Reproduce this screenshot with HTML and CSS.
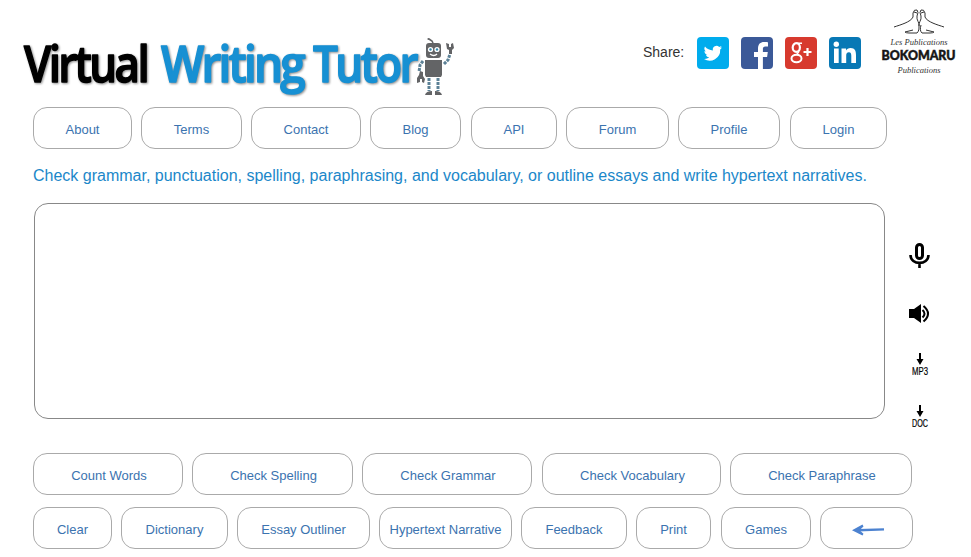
FILE: index.html
```
<!DOCTYPE html>
<html lang="en">
<head>
  <meta charset="UTF-8">
  <title>Virtual Writing Tutor</title>
  <link rel="stylesheet" href="styles.css">
</head>
<body>
  <header class="header">
    <a class="logo" href="#">
      <svg width="440" height="76" viewBox="0 0 440 76">
        <g class="logo-text">
          <text class="logo-black" x="4" y="56" textLength="123" lengthAdjust="spacingAndGlyphs">Virtual</text>
          <text class="logo-blue" x="141" y="56" textLength="142" lengthAdjust="spacingAndGlyphs">Writing</text>
          <text class="logo-blue" x="293" y="56" textLength="103" lengthAdjust="spacingAndGlyphs">Tutor</text>
        </g>
        <!-- robot -->
        <g transform="translate(0 -1)">
          <g fill="#636466">
            <path d="M406 21q0-3 3-3h9q3 0 3 3v9q0 3-3 3h-9q-3 0-3-3z"/>
            <path d="M405 35h17v15l-1 2h-15l-1-2z"/>
            <path d="M405 70q1-4 7-4v4zM415 70v-4q6 0 7 4z"/>
            <path d="M426 18l1 6 2 1v4h3v-4l2-2-1-5-2 1v3h-2v-3zM400 46l3 1v4l2 3-1 4-2-1v-3h-2v3l-3 1v-5l2-3z"/>
          </g>
          <path d="M413 18l-1-2-3-2" stroke="#636466" stroke-width="1.600" fill="none"/>
          <path d="M424 39l4-4 2-6M403 36l-3 4-1 7" stroke="#5c8196" stroke-width="3" fill="none" stroke-dasharray="3 1"/>
          <circle cx="408.500" cy="14" r="1.100" fill="#636466"/>
          <path d="M409 53v13M418 53v13" stroke="#5c8196" stroke-width="3" stroke-dasharray="3 1"/>
          <circle cx="410.500" cy="24.500" r="2.600" fill="#fff"/><circle cx="417" cy="24.500" r="2.600" fill="#fff"/>
          <circle cx="410.500" cy="24.500" r="1.200" fill="#3489ac"/><circle cx="417" cy="24.500" r="1.200" fill="#3489ac"/>
          <path d="M410 29q4 3 7 0" fill="none" stroke="#fff" stroke-width="1.300"/>
        </g>
      </svg>
    </a>
    <div class="share">
      <span class="share-label">Share:</span>
      <a class="social twitter" href="#">
        <svg width="32" height="32" viewBox="0 0 32 32"><path fill="#fff" d="M25 10.500a8 8 0 0 1-2.100.6 3.700 3.700 0 0 0 1.600-2 7.500 7.500 0 0 1-2.300.9 3.700 3.700 0 0 0-6.300 3.400A10.500 10.500 0 0 1 8 9.500a3.700 3.700 0 0 0 1.200 5 3.700 3.700 0 0 1-1.700-.5 3.700 3.700 0 0 0 3 3.700 3.700 3.700 0 0 1-1.700.1 3.700 3.700 0 0 0 3.500 2.500A7.500 7.500 0 0 1 7 21.900a10.500 10.500 0 0 0 16.200-9.400 7 7 0 0 0 1.800-2z"/></svg>
      </a>
      <a class="social facebook" href="#">
        <svg width="32" height="32" viewBox="0 0 32 32"><path fill="#fff" d="M17 32V20h-4v-5h4v-3.500C17 7 19.500 5 23.200 5c1.700 0 3.300.2 3.800.3v4.300h-2.600c-2 0-2.500 1-2.500 2.500V15h4.900l-.7 5h-4.200v12z"/></svg>
      </a>
      <a class="social google" href="#">
        <svg width="32" height="32" viewBox="0 0 32 32" fill="none" stroke="#fff">
          <ellipse cx="11.300" cy="10.500" rx="3.600" ry="4.300" stroke-width="2.200"/>
          <path d="M12 6.200h5M13.500 14c1 2-2.500 2.500-1.500 4" stroke-width="1.600"/>
          <ellipse cx="11.500" cy="21.500" rx="5" ry="3.800" stroke-width="2"/>
          <path d="M22.500 11v8M18.500 15h8" stroke-width="2.200"/>
        </svg>
      </a>
      <a class="social linkedin" href="#">
        <svg width="32" height="32" viewBox="0 0 32 32"><path fill="#fff" d="M5 11.500h4.700V26H5zM12.500 11.500H17v2c.8-1.300 2.300-2.400 4.600-2.400 4.500 0 5.400 3 5.400 6.900v8h-4.700v-7.200c0-1.900-.4-3.600-2.400-3.600-2.100 0-2.700 1.500-2.700 3.500V26h-4.700z"/><circle cx="7.300" cy="7.200" r="2.700" fill="#fff"/></svg>
      </a>
    </div>
    <a class="publisher" href="#">
      <svg width="52" height="27" viewBox="0 0 52 27" fill="none" stroke="#333" stroke-width="1">
        <path d="M1 19C7 17 18 14 20 9l0-4q1-4 4-3 2 2 0 6c-1 4 3 7 2 10 0 3 0 5-2 7h-8q-3 0-4-1l8-2"/>
        <path d="M51 19C45 17 34 14 32 9l0-4q-1-4-4-3-2 2 0 6c1 4-3 7-2 10"/>
        <path d="M28 17c-1 4-1 6 1 8h8q3 0 4-1l-8-2M21 4l3 1M31 4l-3 1"/>
      </svg>
      <span class="pub-script">Les Publications</span>
      <svg width="78" height="14" viewBox="0 0 78 14"><text class="pub-name" x="1.500" y="11" textLength="74" lengthAdjust="spacingAndGlyphs">BOKOMARU</text></svg>
      <span class="pub-script">Publications</span>
    </a>
  </header>

  <nav class="buttons menu">
    <a href="#">About</a>
    <a href="#">Terms</a>
    <a href="#">Contact</a>
    <a href="#">Blog</a>
    <a href="#">API</a>
    <a href="#">Forum</a>
    <a href="#">Profile</a>
    <a href="#">Login</a>
  </nav>

  <p class="tagline">Check grammar, punctuation, spelling, paraphrasing, and vocabulary, or outline essays and write hypertext narratives.</p>

  <main class="editor">
    <textarea class="essay" aria-label="Your text"></textarea>
    <div class="tools">
      <svg class="mic" width="22" height="26" viewBox="0 0 22 26" fill="none" stroke="#000">
        <rect x="7.500" y="1.500" width="6" height="14" rx="3" stroke-width="3"/>
        <path d="M1.500 12c0 10.500 18 10.500 18 0M10.500 19v6" stroke-width="2.600"/>
      </svg>
      <svg class="speaker" width="22" height="20" viewBox="0 0 22 20">
        <path d="M0 5h5l7-5v19l-7-5H0z"/>
        <path d="M13.500 6q4 3.500 0 7.500M14.500 2q9 7.500 0 15.500" fill="none" stroke="#000" stroke-width="2.100"/>
      </svg>
      <a class="download mp3" href="#">
        <svg width="8" height="12" viewBox="0 0 8 12"><path d="M3 0h2v6h2.500L4 12 .5 6H3z"/></svg>
        <svg width="30" height="12" viewBox="0 0 30 12"><text class="download-label" x="7" y="10" textLength="16" lengthAdjust="spacingAndGlyphs">MP3</text></svg>
      </a>
      <a class="download" href="#">
        <svg width="8" height="12" viewBox="0 0 8 12"><path d="M3 0h2v6h2.500L4 12 .5 6H3z"/></svg>
        <svg width="30" height="12" viewBox="0 0 30 12"><text class="download-label" x="7" y="10" textLength="16" lengthAdjust="spacingAndGlyphs">DOC</text></svg>
      </a>
    </div>
  </main>

  <div class="buttons checks">
    <a href="#">Count Words</a>
    <a href="#">Check Spelling</a>
    <a href="#">Check Grammar</a>
    <a href="#">Check Vocabulary</a>
    <a href="#">Check Paraphrase</a>
  </div>
  <div class="buttons extras">
    <a href="#">Clear</a>
    <a href="#">Dictionary</a>
    <a href="#">Essay Outliner</a>
    <a href="#">Hypertext Narrative</a>
    <a href="#">Feedback</a>
    <a href="#">Print</a>
    <a href="#">Games</a>
    <a href="#" aria-label="Back">
      <svg class="arrow" width="33" height="12" viewBox="0 0 33 12"><path d="M32 5.400L6 6.300" stroke="#4c82d0" stroke-width="2.400"/><path d="M0 6.300L10.500.5l1 2L7.500 6.200l4 3.500-1 1.800z" fill="#4c82d0"/></svg>
    </a>
  </div>
</body>
</html>
```

FILE: styles.css
```
* {
  box-sizing: border-box;
}

body {
  margin: 0;
  padding: 0 0 0 33px;
  height: 557px;
  overflow: hidden;
  background: #fff;
  font-family: "Liberation Sans", Arial, sans-serif;
  font-size: 13px;
  color: #333;
}

a {
  color: #3b73af;
  text-decoration: none;
}

svg {
  display: block;
  flex: none;
}

.header {
  display: flex;
  height: 107px;
  margin-left: -13px;
}

.logo {
  width: 440px;
  padding-top: 26px;
}

.logo-text {
  font-family: "Open Sans", sans-serif;
  font-size: 50px;
  font-weight: 600;
  letter-spacing: -3px;
  stroke-width: 1.5px;
  stroke-linejoin: round;
  filter: drop-shadow(1px 1.5px 1px rgba(0, 0, 0, 0.45));
}

.logo-black {
  fill: #000;
  stroke: #000;
}

.logo-blue {
  fill: #1790d3;
  stroke: #1790d3;
}

.share {
  display: flex;
  gap: 12px;
  margin-left: 183px;
  padding-top: 37px;
}

.share-label {
  width: 42px;
  font-size: 14px;
  line-height: 31px;
}

.social {
  width: 32px;
  height: 32px;
  border-radius: 4px;
  overflow: hidden;
}

.twitter {
  background: #00aced;
}

.facebook {
  background: #3b5998;
}

.google {
  background: #d73a2e;
}

.linkedin {
  background: #0878b5;
}

.publisher {
  display: flex;
  flex-direction: column;
  align-items: center;
  width: 78px;
  margin-left: 19px;
  padding-top: 8px;
  color: #333;
}

.pub-script {
  font: italic 8.5px/14px "Liberation Serif", serif;
  white-space: nowrap;
}

.pub-name {
  font: 900 13px Lato, sans-serif;
  fill: #151515;
  stroke: #151515;
  stroke-width: 0.5px;
}

.buttons {
  display: grid;
  column-gap: 9px;
  height: 42px;
}

.buttons a {
  display: flex;
  align-items: center;
  justify-content: center;
  padding-top: 3px;
  border: 1px solid #aaa;
  border-radius: 14px;
  white-space: nowrap;
}

.menu {
  grid-template-columns: 99px 101px 110px 92px 86px 103px 103px 97px;
}

.menu a:nth-child(4),
.menu a:nth-child(7) {
  margin-right: 1px;
}

.checks {
  grid-template-columns: 150px 161px 171px 179px 182px;
  margin-top: 34px;
}

.checks a {
  padding-left: 2px;
}

.checks a:nth-child(3) {
  margin-right: 1px;
}

.extras {
  grid-template-columns: 79px 107px 133px 133px 106px 76px 90px 93px;
  margin-top: 12px;
}

.extras a:nth-child(6) {
  margin-right: 1px;
}

.arrow {
  margin-left: 3px;
}

.tagline {
  margin: 17px 0 18px;
  font-size: 16px;
  line-height: 19px;
  color: #1b87c9;
  white-space: nowrap;
}

.editor {
  display: flex;
  height: 216px;
  margin-left: 1px;
}

.essay {
  width: 851px;
  height: 216px;
  padding: 12px;
  border: 1px solid #888;
  border-radius: 14px;
  resize: none;
  outline: none;
}

.tools {
  display: flex;
  flex-direction: column;
  align-items: center;
  width: 30px;
  margin-left: 20px;
  padding-top: 40px;
}

.speaker {
  margin-top: 35px;
}

.download {
  display: flex;
  flex-direction: column;
  align-items: center;
}

.mp3 {
  margin: 29px 0 28px;
}

.download-label {
  font-family: "Liberation Sans", Arial, sans-serif;
  font-size: 10.5px;
  stroke: #000;
  stroke-width: 0.2px;
}
```
